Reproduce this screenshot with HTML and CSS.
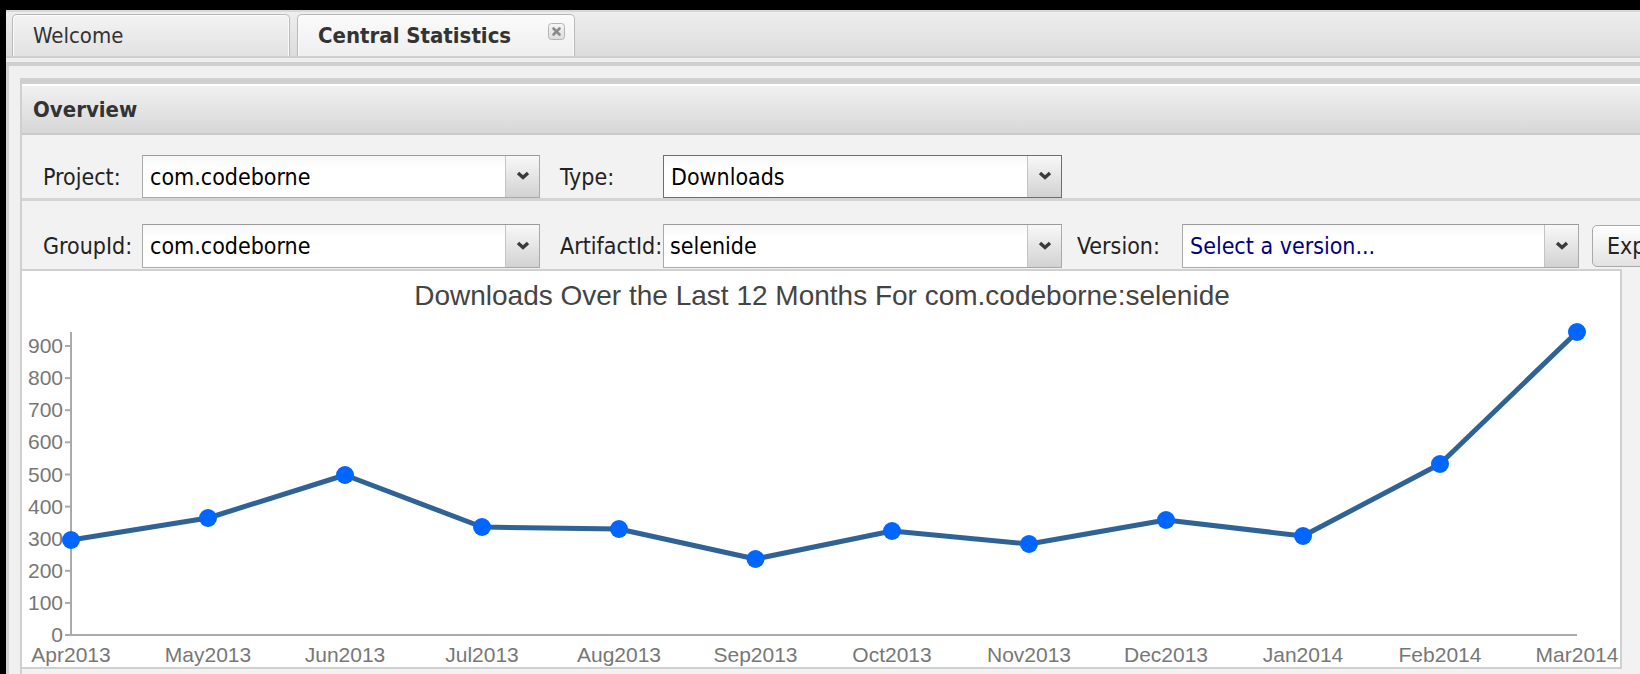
FILE: index.html
```html
<!DOCTYPE html>
<html>
<head>
<meta charset="utf-8">
<link rel="stylesheet" href="styles.css">
</head>
<body>
<div class="app">
  <div class="tabbar">
    <div class="tab">Welcome</div>
    <div class="tab active">Central Statistics
      <span class="close"><svg width="17" height="17" viewBox="0 0 17 17"><defs><linearGradient id="cg" x1="0" y1="0" x2="0" y2="1"><stop offset="0" stop-color="#f6f6f6"/><stop offset="1" stop-color="#dcdcdc"/></linearGradient></defs><rect x="0.5" y="0.5" width="16" height="16" rx="3" fill="url(#cg)" stroke="#b4b4b4"/><path d="M5.5 5.5 L11.5 11.5 M11.5 5.5 L5.5 11.5" stroke="#8a8a8a" stroke-width="2.6" stroke-linecap="round"/></svg></span>
    </div>
  </div>
  <div class="tabline"></div>
  <div class="content">
    <div class="panel">
      <div class="panel-header">Overview</div>
      <div class="row row1">
        <span class="lbl">Project:</span>
        <div class="select"><span class="val">com.codeborne</span><span class="arrow"><svg width="14" height="9" viewBox="0 0 14 9"><polyline points="2,2 7,6.5 12,2" fill="none" stroke="#3a3a3a" stroke-width="3.4"/></svg></span></div>
        <span class="lbl lbl2">Type:</span>
        <div class="select focus"><span class="val">Downloads</span><span class="arrow"><svg width="14" height="9" viewBox="0 0 14 9"><polyline points="2,2 7,6.5 12,2" fill="none" stroke="#3a3a3a" stroke-width="3.4"/></svg></span></div>
      </div>
      <div class="row row2">
        <span class="lbl">GroupId:</span>
        <div class="select"><span class="val">com.codeborne</span><span class="arrow"><svg width="14" height="9" viewBox="0 0 14 9"><polyline points="2,2 7,6.5 12,2" fill="none" stroke="#3a3a3a" stroke-width="3.4"/></svg></span></div>
        <span class="lbl lbl2">ArtifactId:</span>
        <div class="select"><span class="val tight">selenide</span><span class="arrow"><svg width="14" height="9" viewBox="0 0 14 9"><polyline points="2,2 7,6.5 12,2" fill="none" stroke="#3a3a3a" stroke-width="3.4"/></svg></span></div>
        <span class="lbl lbl3">Version:</span>
        <div class="select"><span class="val navy">Select a version...</span><span class="arrow"><svg width="14" height="9" viewBox="0 0 14 9"><polyline points="2,2 7,6.5 12,2" fill="none" stroke="#3a3a3a" stroke-width="3.4"/></svg></span></div>
        <button class="btn">Export</button>
      </div>
      <div class="chart">
        <svg class="plot" width="1600" height="396" viewBox="0 0 1600 396">
          <text class="title" x="800" y="34">Downloads Over the Last 12 Months For com.codeborne:selenide</text>
          <g class="axis">
            <line x1="49" y1="61" x2="49" y2="365"/>
            <line x1="48" y1="364" x2="1555" y2="364"/>
            <line x1="43" y1="364" x2="49" y2="364"/>
            <line x1="43" y1="331.9" x2="49" y2="331.9"/>
            <line x1="43" y1="299.8" x2="49" y2="299.8"/>
            <line x1="43" y1="267.7" x2="49" y2="267.7"/>
            <line x1="43" y1="235.6" x2="49" y2="235.6"/>
            <line x1="43" y1="203.5" x2="49" y2="203.5"/>
            <line x1="43" y1="171.3" x2="49" y2="171.3"/>
            <line x1="43" y1="139.2" x2="49" y2="139.2"/>
            <line x1="43" y1="107.1" x2="49" y2="107.1"/>
            <line x1="43" y1="75" x2="49" y2="75"/>
          </g>
          <g class="ylab">
            <text x="41" y="371">0</text>
            <text x="41" y="339">100</text>
            <text x="41" y="307">200</text>
            <text x="41" y="275">300</text>
            <text x="41" y="243">400</text>
            <text x="41" y="211">500</text>
            <text x="41" y="178">600</text>
            <text x="41" y="146">700</text>
            <text x="41" y="114">800</text>
            <text x="41" y="82">900</text>
          </g>
          <g class="xlab">
            <text x="49" y="391">Apr2013</text>
            <text x="186" y="391">May2013</text>
            <text x="323" y="391">Jun2013</text>
            <text x="460" y="391">Jul2013</text>
            <text x="597" y="391">Aug2013</text>
            <text x="733.5" y="391">Sep2013</text>
            <text x="870" y="391">Oct2013</text>
            <text x="1007" y="391">Nov2013</text>
            <text x="1144" y="391">Dec2013</text>
            <text x="1281" y="391">Jan2014</text>
            <text x="1418" y="391">Feb2014</text>
            <text x="1555" y="391">Mar2014</text>
          </g>
          <polyline class="series" points="49,269 186,247 323,204 460,256 597,258 733.5,288 870,260 1007,273 1144,249 1281,265 1418,193 1555,61"/>
          <g class="dots">
            <circle cx="49" cy="269" r="9"/>
            <circle cx="186" cy="247" r="9"/>
            <circle cx="323" cy="204" r="9"/>
            <circle cx="460" cy="256" r="9"/>
            <circle cx="597" cy="258" r="9"/>
            <circle cx="733.5" cy="288" r="9"/>
            <circle cx="870" cy="260" r="9"/>
            <circle cx="1007" cy="273" r="9"/>
            <circle cx="1144" cy="249" r="9"/>
            <circle cx="1281" cy="265" r="9"/>
            <circle cx="1418" cy="193" r="9"/>
            <circle cx="1555" cy="61" r="9"/>
          </g>
        </svg>
      </div>
    </div>
  </div>
</div>
</body>
</html>
```
FILE: styles.css
```css
html, body {
  margin: 0;
  height: 100%;
  overflow: hidden;
  background: #000;
}
body {
  padding: 10px 0 0 6px;
  box-sizing: border-box;
  font-family: "DejaVu Sans Condensed", "DejaVu Sans", sans-serif;
  font-stretch: condensed;
}
.app {
  background: #f0f0f0;
  height: 664px;
  width: 1634px;
  overflow: hidden;
}
.tabbar {
  border-top: 2px solid #d8d8d8;
  height: 44px;
  background: linear-gradient(#eeeeee, #dcdcdc);
  border-bottom: 2px solid #cfcfcf;
  display: flex;
  align-items: flex-end;
  padding-left: 6px;
  gap: 7px;
}
.tab {
  width: 278px;
  height: 42px;
  box-sizing: border-box;
  border: 1px solid #b9b9b9;
  border-bottom: none;
  border-radius: 5px 5px 0 0;
  box-shadow: inset 1px 1px 0 #fbfbfb, inset -1px 0 0 #fbfbfb;
  background: linear-gradient(#f3f3f3, #e2e2e2);
  font-size: 22px;
  color: #333;
  padding-left: 20px;
  display: flex;
  align-items: center;
}
.tab.active {
  background: linear-gradient(#fbfbfb, #eeeeee);
  font-weight: bold;
  position: relative;
}
.close {
  position: absolute;
  right: 9px;
  top: 8px;
  width: 17px;
  height: 17px;
  display: block;
}
.close svg { display: block; }
.tabline {
  height: 4px;
  background: #eeeeee;
  border-bottom: 4px solid #cfcfcf;
}
.content {
  border-left: 3px solid #d4d4d4;
  padding: 12px 0 0 11px;
}
.panel {
  width: 1700px;
  border-left: 2px solid #cfcfcf;
  background: #f2f2f2;
  height: 700px;
}
.panel-header {
  height: 49px;
  line-height: 51px;
  border-top: 6px solid #d0d0d0;
  border-bottom: 2px solid #c9c9c9;
  box-shadow: inset 0 2px 0 #ffffff;
  background: linear-gradient(#f2f2f2, #d7d7d7);
  padding-left: 11px;
  font-size: 22px;
  font-weight: bold;
  color: #333;
}
.row {
  display: grid;
  grid-template-columns: 99px 398px 123px 399px 120px 397px auto;
  align-items: center;
  padding-left: 21px;
}
.row1 {
  padding-top: 20px;
  border-bottom: 3px solid #d4d4d4;
}
.row2 {
  padding-top: 23px;
}
.lbl {
  font-size: 23px;
  color: #222;
}
.lbl2 { padding-left: 20px; }
.lbl3 { padding-left: 15px; }
.select {
  height: 43px;
  box-sizing: border-box;
  border: 1px solid #a9a9a9;
  border-top-color: #9a9a9a;
  background: linear-gradient(#f7f7f7, #ffffff 30%);
  display: flex;
  font-size: 23px;
  color: #000;
}
.row2 .select { height: 44px; }
.select.focus { border-color: #6e6e6e; }
.val {
  flex: 1;
  padding-left: 7px;
  display: flex;
  align-items: center;
  white-space: nowrap;
  overflow: hidden;
}
.val.tight { padding-left: 6px; }
.val.navy { color: #000080; }
.arrow {
  width: 33px;
  border-left: 1px solid #c4c4c4;
  background: linear-gradient(#f8f8f8, #d2d2d2);
  display: flex;
  align-items: center;
  justify-content: center;
}
.arrow svg { display: block; margin-top: -2px; }
.btn {
  justify-self: start;
  margin-left: 13px;
  height: 42px;
  padding: 0 10px 0 14px;
  border: 1px solid #a9a9a9;
  border-radius: 5px;
  background: linear-gradient(#ffffff, #e2e2e2);
  font-family: inherit;
  font-size: 23px;
  color: #222;
  white-space: nowrap;
}
.chart {
  width: 1600px;
  height: 400px;
  box-sizing: border-box;
  border: 2px solid #d0d0d0;
  border-left: none;
  background: #fff;
  margin-top: 1px;
}
.plot { display: block; font-family: "Liberation Sans", Arial, sans-serif; }
.title {
  font-size: 28px;
  fill: #444;
  text-anchor: middle;
}
.axis line {
  stroke: #aaaaaa;
  stroke-width: 2;
}
.ylab text {
  font-size: 21px;
  fill: #777;
  text-anchor: end;
}
.xlab text {
  font-size: 21px;
  fill: #777;
  text-anchor: middle;
}
.series {
  fill: none;
  stroke: #2f6396;
  stroke-width: 5;
  stroke-linejoin: round;
}
.dots circle { fill: #0066ff; }
```
